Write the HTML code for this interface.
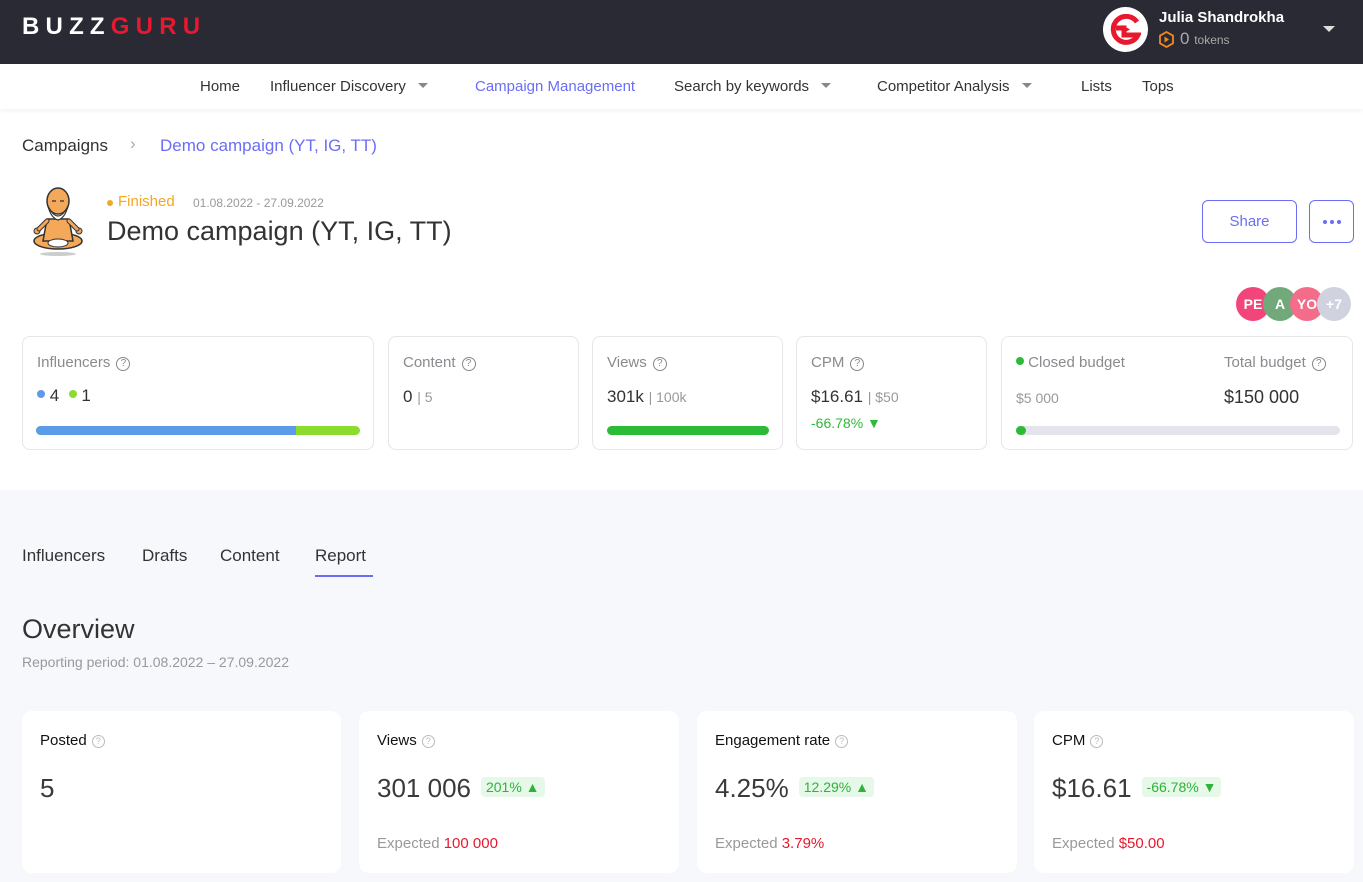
<!DOCTYPE html>
<html><head><meta charset="utf-8"><style>
*{box-sizing:border-box;margin:0;padding:0}
body{width:1363px;height:882px;overflow:hidden;font-family:"Liberation Sans",sans-serif;background:#fff;position:relative;color:#333}
.a{position:absolute;white-space:nowrap}
.top{position:absolute;left:0;top:0;width:1363px;height:64px;background:#292a33}
.nav{position:absolute;left:0;top:64px;width:1363px;height:45px;background:#fff;box-shadow:0 2px 4px rgba(0,0,0,.05);font-size:15px;color:#333}
.nav span{position:absolute;top:14px}
.caret{display:inline-block;width:0;height:0;border-left:5px solid transparent;border-right:5px solid transparent;border-top:5px solid #888;margin-left:12px;vertical-align:3px}
.card{position:absolute;border:1px solid #e6e6ea;border-radius:8px;background:#fff}
.lbl{font-size:15px;color:#8a8a8f}
.q{display:inline-block;width:14px;height:14px;border:1.5px solid #888;border-radius:50%;font-size:10px;text-align:center;line-height:11px;color:#888;margin-left:6px;vertical-align:1px}
.gray{position:absolute;left:0;top:490px;width:1363px;height:392px;background:#f7f8fc}
.bc{position:absolute;top:711px;height:162px;background:#fff;border-radius:10px}
.bc .t{position:absolute;left:18px;top:21px;font-size:15px;color:#111}
.bc .v{position:absolute;left:18px;top:62px;font-size:26px;color:#3a3a3a}
.bc .e{position:absolute;left:18px;top:124px;font-size:15px;color:#999}
.bc .e b{font-weight:normal;color:#e8182e}
.pill{display:inline-block;background:#e6f8e8;color:#2eb33b;font-size:14px;padding:2px 5px;border-radius:4px;vertical-align:5px;margin-left:10px}
.q2{display:inline-block;width:13px;height:13px;border:1px solid #bbb;border-radius:50%;font-size:9px;text-align:center;line-height:11px;color:#bbb;margin-left:5px;vertical-align:1px}
</style></head><body>
<div class="top">
 <div class="a" style="left:22px;top:13px;font-size:24px;font-weight:bold;letter-spacing:6.2px;color:#fff">BUZZ<span style="color:#e8182e">GURU</span></div>
 <div class="a" style="left:1103px;top:7px;width:45px;height:45px;border-radius:50%;background:#fff"></div>
 <svg class="a" style="left:1110px;top:14px" width="31" height="31" viewBox="0 0 31 31"><path d="M27 8A13 13 0 1 0 28 21H14V14H6" fill="none" stroke="#e8182e" stroke-width="5"/><path d="M12 11l8 4.5-8 4.5z" fill="#e8182e"/></svg>
 <div class="a" style="left:1159px;top:9px;font-size:15px;font-weight:bold;color:#fff">Julia Shandrokha</div>
 <svg class="a" style="left:1159px;top:31px" width="15" height="17" viewBox="0 0 15 17"><path d="M7.5 1L14 4.7v7.6L7.5 16 1 12.3V4.7z" fill="none" stroke="#f08a1c" stroke-width="1.8"/><path d="M5.5 5.5l4.5 3-4.5 3z" fill="#f08a1c"/></svg>
 <div class="a" style="left:1180px;top:29px;font-size:17px;color:#aaa">0 <span style="font-size:12px">tokens</span></div>
 <div class="a" style="left:1323px;top:26px;border-left:6px solid transparent;border-right:6px solid transparent;border-top:6px solid #ddd"></div>
</div>
<div class="nav">
 <span style="left:200px">Home</span>
 <span style="left:270px">Influencer Discovery<i class="caret"></i></span>
 <span style="left:475px;color:#6b6ef5">Campaign Management</span>
 <span style="left:674px">Search by keywords<i class="caret"></i></span>
 <span style="left:877px">Competitor Analysis<i class="caret"></i></span>
 <span style="left:1081px">Lists</span>
 <span style="left:1142px">Tops</span>
</div>
<div class="a" style="left:22px;top:136px;font-size:17px;color:#333">Campaigns</div>
<div class="a" style="left:130px;top:134px;font-size:17px;color:#aaa">›</div>
<div class="a" style="left:160px;top:136px;font-size:17px;color:#6b6ef5">Demo campaign (YT, IG, TT)</div>
<!-- guru -->
<svg class="a" style="left:25px;top:185px" width="66" height="72" viewBox="0 0 66 72">
<ellipse cx="33" cy="69" rx="18" ry="2" fill="#ccc"/>
<ellipse cx="33" cy="56" rx="24" ry="8" fill="#f3a85a" stroke="#333" stroke-width="1.5"/>
<path d="M22 34h22l4 22H18z" fill="#f3a85a" stroke="#333" stroke-width="1.5"/>
<ellipse cx="12" cy="46" rx="3" ry="3" fill="#f3a85a" stroke="#333"/>
<ellipse cx="54" cy="46" rx="3" ry="3" fill="#f3a85a" stroke="#333"/>
<path d="M14 44l8-8M52 44l-8-8" stroke="#333" stroke-width="5" stroke-linecap="round"/>
<path d="M14 44l8-8M52 44l-8-8" stroke="#f3a85a" stroke-width="3" stroke-linecap="round"/>
<ellipse cx="33" cy="16" rx="11" ry="13" fill="#f3a85a" stroke="#333" stroke-width="1.5"/>
<path d="M23 21q10 20 20 0q-3 12-10 14q-7-2-10-14z" fill="#fff" stroke="#333" stroke-width="1.2"/>
<path d="M27 16h4M35 16h4" stroke="#333" stroke-width="1.2"/>
<ellipse cx="33" cy="58" rx="10" ry="4" fill="#fff" stroke="#333"/>
</svg>
<div class="a" style="left:107px;top:200px;width:6px;height:6px;border-radius:50%;background:#f5a623"></div>
<div class="a" style="left:118px;top:193px;font-size:15px;color:#f5a623">Finished</div>
<div class="a" style="left:193px;top:196px;font-size:12px;color:#999">01.08.2022 - 27.09.2022</div>
<div class="a" style="left:107px;top:216px;font-size:27px;color:#333">Demo campaign (YT, IG, TT)</div>
<div class="a" style="left:1202px;top:200px;width:95px;height:43px;border:1px solid #6b6ef5;border-radius:6px;color:#6b6ef5;font-size:15px;text-align:center;line-height:41px">Share</div>
<div class="a" style="left:1309px;top:200px;width:45px;height:43px;border:1px solid #6b6ef5;border-radius:6px">
 <div class="a" style="left:13px;top:19px;width:4px;height:4px;border-radius:50%;background:#6b6ef5"></div>
 <div class="a" style="left:20px;top:19px;width:4px;height:4px;border-radius:50%;background:#6b6ef5"></div>
 <div class="a" style="left:27px;top:19px;width:4px;height:4px;border-radius:50%;background:#6b6ef5"></div>
</div>
<div class="a" style="left:1236px;top:287px;width:34px;height:34px;border-radius:50%;background:#f2467b;color:#fff;font-size:14px;font-weight:bold;text-align:center;line-height:34px">PE</div>
<div class="a" style="left:1263px;top:287px;width:34px;height:34px;border-radius:50%;background:#72a97a;color:#fff;font-size:14px;font-weight:bold;text-align:center;line-height:34px">A</div>
<div class="a" style="left:1290px;top:287px;width:34px;height:34px;border-radius:50%;background:#f36d8a;color:#fff;font-size:14px;font-weight:bold;text-align:center;line-height:34px;overflow:hidden">YO</div>
<div class="a" style="left:1317px;top:287px;width:34px;height:34px;border-radius:50%;background:#d0d2df;color:#fff;font-size:14px;font-weight:bold;text-align:center;line-height:34px">+7</div>

<div class="card" style="left:22px;top:336px;width:352px;height:114px">
 <div class="a lbl" style="left:14px;top:17px">Influencers<span class="q">?</span></div>
 <div class="a" style="left:14px;top:49px;font-size:17px"><span style="display:inline-block;width:8px;height:8px;border-radius:50%;background:#5b9be8;vertical-align:3px"></span> 4 &nbsp;<span style="display:inline-block;width:8px;height:8px;border-radius:50%;background:#8bdc2f;vertical-align:3px"></span> 1</div>
 <div class="a" style="left:13px;top:89px;width:324px;height:9px;border-radius:5px;background:#8bdc2f;overflow:hidden"><div style="width:260px;height:9px;background:#5b9be8"></div></div>
</div>
<div class="card" style="left:388px;top:336px;width:191px;height:114px">
 <div class="a lbl" style="left:14px;top:17px">Content<span class="q">?</span></div>
 <div class="a" style="left:14px;top:50px;font-size:17px">0 <span style="font-size:14px;color:#999">| 5</span></div>
</div>
<div class="card" style="left:592px;top:336px;width:191px;height:114px">
 <div class="a lbl" style="left:14px;top:17px">Views<span class="q">?</span></div>
 <div class="a" style="left:14px;top:50px;font-size:17px">301k <span style="font-size:14px;color:#999">| 100k</span></div>
 <div class="a" style="left:14px;top:89px;width:162px;height:9px;border-radius:5px;background:#2cbb36"></div>
</div>
<div class="card" style="left:796px;top:336px;width:191px;height:114px">
 <div class="a lbl" style="left:14px;top:17px">CPM<span class="q">?</span></div>
 <div class="a" style="left:14px;top:50px;font-size:17px">$16.61 <span style="font-size:14px;color:#999">| $50</span></div>
 <div class="a" style="left:14px;top:78px;font-size:14px;color:#2cbb36">-66.78% ▼</div>
</div>
<div class="card" style="left:1001px;top:336px;width:352px;height:114px">
 <div class="a lbl" style="left:14px;top:17px"><span style="display:inline-block;width:8px;height:8px;border-radius:50%;background:#2cbb36;vertical-align:2px"></span> Closed budget</div>
 <div class="a lbl" style="left:222px;top:17px">Total budget<span class="q">?</span></div>
 <div class="a" style="left:14px;top:53px;font-size:14px;color:#999">$5 000</div>
 <div class="a" style="left:222px;top:50px;font-size:18px;color:#333">$150 000</div>
 <div class="a" style="left:14px;top:89px;width:324px;height:9px;border-radius:5px;background:#e4e4ec"><div style="width:10px;height:9px;border-radius:5px;background:#2cbb36"></div></div>
</div>

<div class="gray">
 <div class="a" style="left:22px;top:56px;font-size:17px;color:#333">Influencers</div>
 <div class="a" style="left:142px;top:56px;font-size:17px;color:#333">Drafts</div>
 <div class="a" style="left:220px;top:56px;font-size:17px;color:#333">Content</div>
 <div class="a" style="left:315px;top:56px;font-size:17px;color:#333">Report</div>
 <div class="a" style="left:315px;top:85px;width:58px;height:2px;background:#6b6ef5"></div>
 <div class="a" style="left:22px;top:124px;font-size:27px;color:#333">Overview</div>
 <div class="a" style="left:22px;top:164px;font-size:14px;color:#999">Reporting period: 01.08.2022 – 27.09.2022</div>
</div>
<div class="bc" style="left:22px;width:319px"><div class="t">Posted<span class="q2">?</span></div><div class="v">5</div></div>
<div class="bc" style="left:359px;width:320px"><div class="t">Views<span class="q2">?</span></div><div class="v">301 006<span class="pill">201% ▲</span></div><div class="e">Expected <b>100 000</b></div></div>
<div class="bc" style="left:697px;width:320px"><div class="t">Engagement rate<span class="q2">?</span></div><div class="v">4.25%<span class="pill">12.29% ▲</span></div><div class="e">Expected <b>3.79%</b></div></div>
<div class="bc" style="left:1034px;width:320px"><div class="t">CPM<span class="q2">?</span></div><div class="v">$16.61<span class="pill">-66.78% ▼</span></div><div class="e">Expected <b>$50.00</b></div></div>
</body></html>
